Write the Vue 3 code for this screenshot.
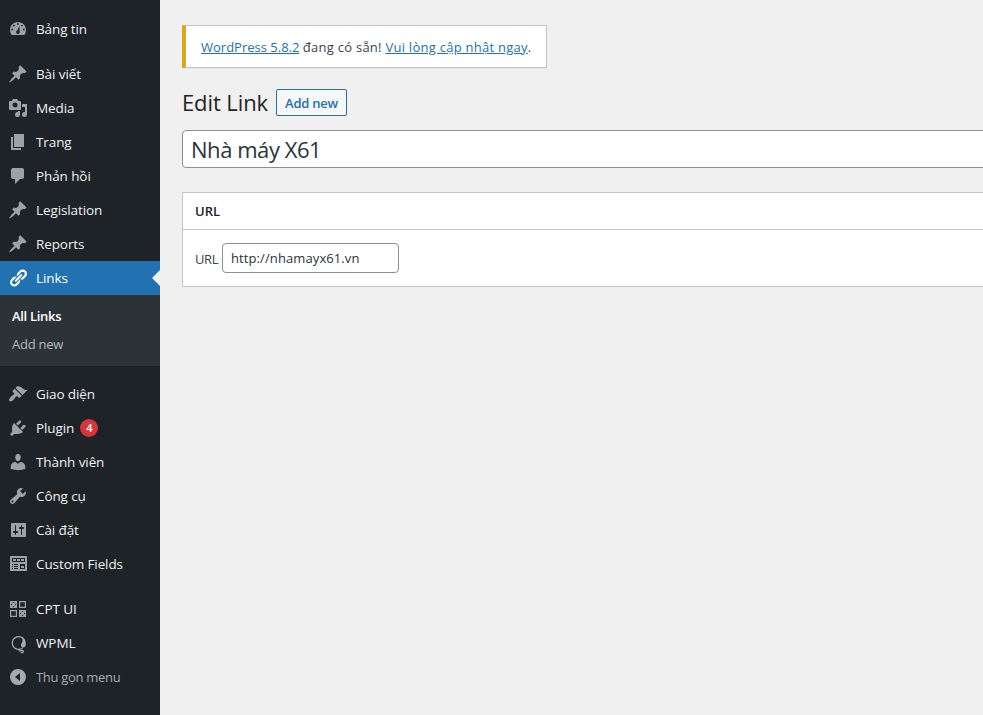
<script setup>
const pin = 'M10.44 3.02l1.82-1.82 6.36 6.35-1.83 1.82c-1.05-.68-2.48-.57-3.41.36l-.75.75c-.92.93-1.04 2.35-.35 3.41l-1.83 1.82-2.41-2.41-2.8 2.79c-.42.42-3.38 2.71-3.8 2.29s1.86-3.39 2.28-3.81l2.79-2.79L4.1 9.36l1.83-1.82c1.05.69 2.48.57 3.4-.36l.75-.75c.93-.92 1.05-2.35.36-3.41z'
const disc = (x, y, r) => `M${x - r} ${y}a${r} ${r} 0 1 0 ${2 * r} 0a${r} ${r} 0 1 0 ${-2 * r} 0z`

const dashboard = 'M3.76 16h12.48A7.98 7.98 0 0 0 18 11c0-4.42-3.58-8-8-8s-8 3.58-8 8c0 1.89.66 3.63 1.76 5z'
  + disc(10, 5, 0.9) + disc(6, 6.6, 0.9) + disc(14, 6.6, 0.9) + disc(4.2, 10.5, 0.9) + disc(15.8, 10.5, 0.9)
  + 'M11.3 7L11.7 12.2A1.9 1.9 0 1 1 9.4 11.2z'

const groups = [
  [{ label: 'Bảng tin', icon: dashboard }],
  [
    { label: 'Bài viết', icon: pin },
    { label: 'Media', icon: 'M13 11V4c0-.55-.45-1-1-1h-1.67L9 1H5L3.67 3H2c-.55 0-1 .45-1 1v7c0 .55.45 1 1 1h10c.55 0 1-.45 1-1zM7 4.5a2.5 2.5 0 1 1 0 5a2.5 2.5 0 0 1 0-5zM14 6h5v10.5a2.5 2.5 0 1 1-2-2.45V9h-3zM10 14.05V13h2v3.5a2.5 2.5 0 1 1-2-2.45z' },
    { label: 'Trang', icon: 'M6 15V2h10v13H6zm-1 1h8v2H3V5h2v11z' },
    { label: 'Phản hồi', icon: 'M5 2h9c1.1 0 2 .9 2 2v7c0 1.1-.9 2-2 2h-2l-5 5v-5H5c-1.1 0-2-.9-2-2V4c0-1.1.9-2 2-2z' },
    { label: 'Legislation', icon: pin },
    { label: 'Reports', icon: pin },
    { label: 'Links', active: true, icon: 'M17.74 2.76c1.68 1.69 1.68 4.41 0 6.1l-1.53 1.52c-1.12 1.12-2.7 1.47-4.14 1.09l2.62-2.61.76-.77.76-.76c.84-.84.84-2.2 0-3.04-.84-.85-2.2-.85-3.04 0l-.77.76-3.38 3.38c-.37-1.44-.02-3.02 1.1-4.14l1.52-1.53c1.69-1.68 4.42-1.68 6.1 0zM8.59 13.43l5.34-5.34c.42-.42.42-1.1 0-1.52-.44-.43-1.13-.39-1.53 0l-5.33 5.34c-.42.42-.42 1.1 0 1.52.44.43 1.13.39 1.52 0zm-.76 2.29l4.14-4.15c.38 1.44.03 3.02-1.09 4.14l-1.52 1.53c-1.69 1.68-4.41 1.68-6.1 0-1.68-1.68-1.68-4.42 0-6.1l1.53-1.52c1.12-1.12 2.7-1.47 4.14-1.1l-4.14 4.15c-.85.84-.85 2.2 0 3.05.84.84 2.2.84 3.04 0z', children: ['All Links', 'Add new'] },
  ],
  [
    { label: 'Giao diện', icon: 'M14.48 11.06L7.41 3.99l1.5-1.5c.5-.56 2.3-.47 3.51.32 1.21.8 1.43 1.28 2.91 2.1 1.18.64 2.45 1.26 4.45.85zm-.71.71L6.7 4.7 4.93 6.47c-.39.39-.39 1.02 0 1.41l1.06 1.06c.39.39.39 1.03 0 1.42-.6.6-1.43 1.11-2.21 1.69-.35.26-.7.53-1.01.84C1.43 14.23.4 16.08 1.4 17.07c.99 1 2.84-.03 4.18-1.36.31-.31.58-.66.85-1.02.57-.78 1.08-1.61 1.69-2.21.39-.39 1.02-.39 1.41 0l1.06 1.06c.39.39 1.02.39 1.41 0z' },
    { label: 'Plugin', count: 4, icon: 'M13.11 4.36L9.87 7.6 8 5.73l3.24-3.24c.35-.34 1.05-.2 1.56.32.52.51.66 1.21.31 1.55zm-8 1.77l.91-1.12 9.01 9.01-1.19.84c-.71.71-2.63 1.16-3.82 1.16H6.14L4.9 17.26c-.59.59-1.54.59-2.12 0-.59-.58-.59-1.53 0-2.12l1.24-1.24v-3.88c0-1.13.4-3.19 1.09-3.89zm7.26 3.97l3.24-3.24c.34-.35 1.04-.21 1.55.31.52.51.66 1.21.31 1.55l-3.24 3.25z' },
    { label: 'Thành viên', icon: 'M10 9.25c-2.27 0-2.73-3.44-2.73-3.44C7 4.02 7.82 2 9.97 2c2.16 0 2.98 2.02 2.71 3.81 0 0-.41 3.44-2.68 3.44zm0 2.57L12.72 10c2.39 0 4.52 2.33 4.52 4.53v2.49s-3.65 1.13-7.24 1.13c-3.65 0-7.24-1.13-7.24-1.13v-2.49c0-2.25 1.94-4.48 4.47-4.48z' },
    { label: 'Công cụ', icon: 'M16.68 9.77c-1.34 1.34-3.3 1.67-4.95.99l-5.41 6.52c-.99.99-2.59.99-3.58 0s-.99-2.59 0-3.57l6.52-5.42c-.68-1.65-.35-3.61.99-4.95 1.28-1.28 3.12-1.62 4.72-1.06l-2.89 2.89 2.82 2.82 2.86-2.87c.53 1.58.18 3.39-1.08 4.65zM3.81 16.21c.4.39 1.04.39 1.43 0 .4-.4.4-1.04 0-1.43-.39-.4-1.03-.4-1.43 0-.39.39-.39 1.03 0 1.43z' },
    { label: 'Cài đặt', icon: 'M18 16V4c0-.55-.45-1-1-1H4c-.55 0-1 .45-1 1v12c0 .55.45 1 1 1h13c.55 0 1-.45 1-1zM8 11h1c.55 0 1 .45 1 1s-.45 1-1 1H8v1.5c0 .28-.22.5-.5.5s-.5-.22-.5-.5V13H6c-.55 0-1-.45-1-1s.45-1 1-1h1V5.5c0-.28.22-.5.5-.5s.5.22.5.5V11zm5-2h-1c-.55 0-1-.45-1-1s.45-1 1-1h1V5.5c0-.28.22-.5.5-.5s.5.22.5.5V7h1c.55 0 1 .45 1 1s-.45 1-1 1h-1v5.5c0 .28-.22.5-.5.5s-.5-.22-.5-.5V9z' },
    { label: 'Custom Fields', icon: 'M19 16V3c0-.55-.45-1-1-1H3c-.55 0-1 .45-1 1v13c0 .55.45 1 1 1h15c.55 0 1-.45 1-1zM4 4h13v4H4V4zm1 1v2h3V5H5zm4 0v2h3V5H9zm4 0v2h3V5h-3zM4 10h1v1H4zM6 10h4v1H6v-1zm6 0h5v5h-5v-5zM4 12h1v1H4zM6 12h4v1H6v-1zm7 0v2h3v-2h-3zM4 14h1v1H4zM6 14h4v1H6v-1z' },
  ],
  [
    { label: 'CPT UI', kind: 'cpt' },
    { label: 'WPML', kind: 'wpml' },
    { label: 'Thu gọn menu', kind: 'collapse', muted: true },
  ],
]
</script>

<template>
  <div class="admin">
    <nav class="sidebar">
      <ul v-for="(group, g) in groups" :key="g" class="group">
        <li v-for="item in group" :key="item.label">
          <a class="item" :class="{ active: item.active, muted: item.muted }">
            <svg class="icon" :class="item.kind" viewBox="0 0 20 20">
              <path v-if="item.icon" fill-rule="evenodd" :d="item.icon" />
              <g v-else-if="item.kind === 'cpt'">
                <path fill-rule="evenodd" d="M2 2h7v7H2zM11 2h7v7h-7zM12.2 3.2v4.6h4.6V3.2zM2 11h7v7H2zM3.2 12.2v4.6h4.6v-4.6zM11 11h7v7h-7z" />
                <path class="cut" d="M5.5 2.8l1 1.2h-2zM5.5 8.2l1-1.2h-2zM2.8 5.5l1.2-1v2zM8.2 5.5l-1.2-1v2zM14.5 11.8l1 1.2h-2zM14.5 17.2l1-1.2h-2zM11.8 14.5l1.2-1v2zM17.2 14.5l-1.2-1v2z" />
              </g>
              <g v-else-if="item.kind === 'wpml'">
                <path class="line" d="M16.6 6.5A6.4 6.4 0 1 0 11.5 15.3C13 15 14.2 14.4 14.8 13.5M11.5 15.3C10.6 16.6 11.6 17.3 13 16.7S15.6 16.6 15.2 17.9S13.2 19 13 17.9" />
                <path d="M14.2 4C16.8 4.8 18.2 7.2 17.8 10.6C17.4 12.9 16.2 13.9 14.8 13.5C12.8 12.9 12.4 11.2 13.4 9.6C14.6 8 14.9 6 14.2 4z" />
              </g>
              <path v-else fill-rule="evenodd" d="M10 2a8 8 0 1 1 0 16a8 8 0 0 1 0-16zM12 6v8l-5-4z" />
            </svg>
            <span>{{ item.label }}</span>
            <span v-if="item.count" class="count">{{ item.count }}</span>
          </a>
          <ul v-if="item.children" class="submenu">
            <li v-for="(child, i) in item.children" :key="child" :class="{ current: i === 0 }">{{ child }}</li>
          </ul>
        </li>
      </ul>
    </nav>

    <main class="content">
      <div class="notice">
        <a>WordPress 5.8.2</a> <span class="wide">đang có sẵn! <a>Vui lòng cập nhật ngay</a>.</span>
      </div>
      <header class="heading">
        <h1>Edit Link</h1>
        <a class="add">Add new</a>
      </header>
      <input class="title" type="text" value="Nhà máy X61" />
      <section class="box">
        <h2>URL</h2>
        <div class="field">
          <label for="url">URL</label>
          <input id="url" type="text" value="http://nhamayx61.vn" />
        </div>
      </section>
    </main>
  </div>
</template>

<style>
body {
  background: #f0f0f0;
}
</style>

<style scoped>
.admin {
  display: flex;
  height: 715px;
  overflow: hidden;
  background: #f0f0f0;
  color: #3c434a;
  font: 13px/18px "Open Sans", "Noto Sans", sans-serif;
}
ul {
  list-style: none;
  margin: 0;
  padding: 0;
}
.sidebar {
  width: 160px;
  flex: none;
  padding-top: 12px;
  box-sizing: border-box;
  background: #1d2327;
}
.group {
  margin-bottom: 11px;
}
.item {
  position: relative;
  display: flex;
  align-items: center;
  height: 34px;
  padding-left: 8px;
  color: #f0f0f1;
  font-size: 13.5px;
  letter-spacing: -0.1px;
}
.icon {
  width: 20px;
  height: 20px;
  margin-right: 8px;
  fill: #9ca2a7;
}
.wpml,
.collapse {
  fill: #a7aaad;
}
.cut {
  fill: #1d2327;
}
.line {
  fill: none;
  stroke: #a7aaad;
  stroke-width: 1.3;
}
.wpml {
  transform: translateY(1px);
}
.active {
  background: #2271b1;
  color: #fff;
}
.active .icon {
  fill: #fff;
}
.active::after {
  content: "";
  position: absolute;
  right: 0;
  top: 9px;
  border: 8px solid transparent;
  border-left: 0;
  border-right-color: #f0f0f0;
}
.muted {
  color: #a7aaad;
  font-size: 13px;
  letter-spacing: -0.3px;
}
.count {
  width: 18px;
  height: 18px;
  margin-left: 6px;
  border-radius: 50%;
  background: #d63638;
  color: #fff;
  font-size: 11px;
  font-weight: 600;
  text-align: center;
}
.submenu {
  height: 71px;
  padding: 7px 12px;
  box-sizing: border-box;
  background: #2c3338;
  color: #b4b9be;
}
.submenu li {
  height: 28px;
  line-height: 28px;
  letter-spacing: -0.25px;
}
.submenu .current {
  color: #fff;
  font-weight: 600;
  letter-spacing: -0.3px;
}
.content {
  flex: 1;
  min-width: 0;
  padding: 25px 0 0 22px;
}
.notice {
  width: 365px;
  height: 43px;
  box-sizing: border-box;
  padding: 12px 0 0 15px;
  border: 1px solid #c3c4c7;
  border-left: 4px solid #dba617;
  background: #fff;
  box-shadow: 0 1px 1px rgba(0, 0, 0, 0.04);
  white-space: nowrap;
}
.notice a {
  color: #2271b1;
  text-decoration: underline;
}
.wide {
  letter-spacing: 0.26px;
}
.heading {
  display: flex;
  align-items: center;
  height: 27px;
  margin-top: 21px;
}
h1 {
  margin: 0 8px 0 0;
  color: #1d2327;
  font-size: 22px;
  font-weight: 400;
  line-height: 27px;
  letter-spacing: -0.1px;
}
.add {
  width: 71px;
  height: 27px;
  box-sizing: border-box;
  border: 1px solid #2271b1;
  border-radius: 2px;
  background: #f6f7f7;
  color: #2271b1;
  font-weight: 600;
  line-height: 26px;
  letter-spacing: -0.25px;
  text-align: center;
}
input {
  box-sizing: border-box;
  border: 1px solid #8c8f94;
  border-radius: 4px;
  background: #fff;
  color: #2c3338;
  font: inherit;
  outline: none;
}
.title {
  display: block;
  width: 900px;
  height: 38px;
  margin-top: 14px;
  padding: 2px 8px;
  font-size: 22px;
  letter-spacing: -0.45px;
}
.box {
  width: 900px;
  height: 95px;
  margin-top: 24px;
  box-sizing: border-box;
  border: 1px solid #c3c4c7;
  background: #fff;
}
h2 {
  height: 36px;
  margin: 0;
  padding-left: 12px;
  border-bottom: 1px solid #c3c4c7;
  color: #1d2327;
  font-size: 13px;
  font-weight: 600;
  line-height: 36px;
}
.field {
  display: flex;
  gap: 4px;
  padding: 13px 12px;
}
.field label {
  width: 23px;
  line-height: 32px;
  letter-spacing: -0.4px;
}
.field input {
  width: 177px;
  height: 30px;
  padding: 0 8px;
  letter-spacing: 0.1px;
}
</style>
